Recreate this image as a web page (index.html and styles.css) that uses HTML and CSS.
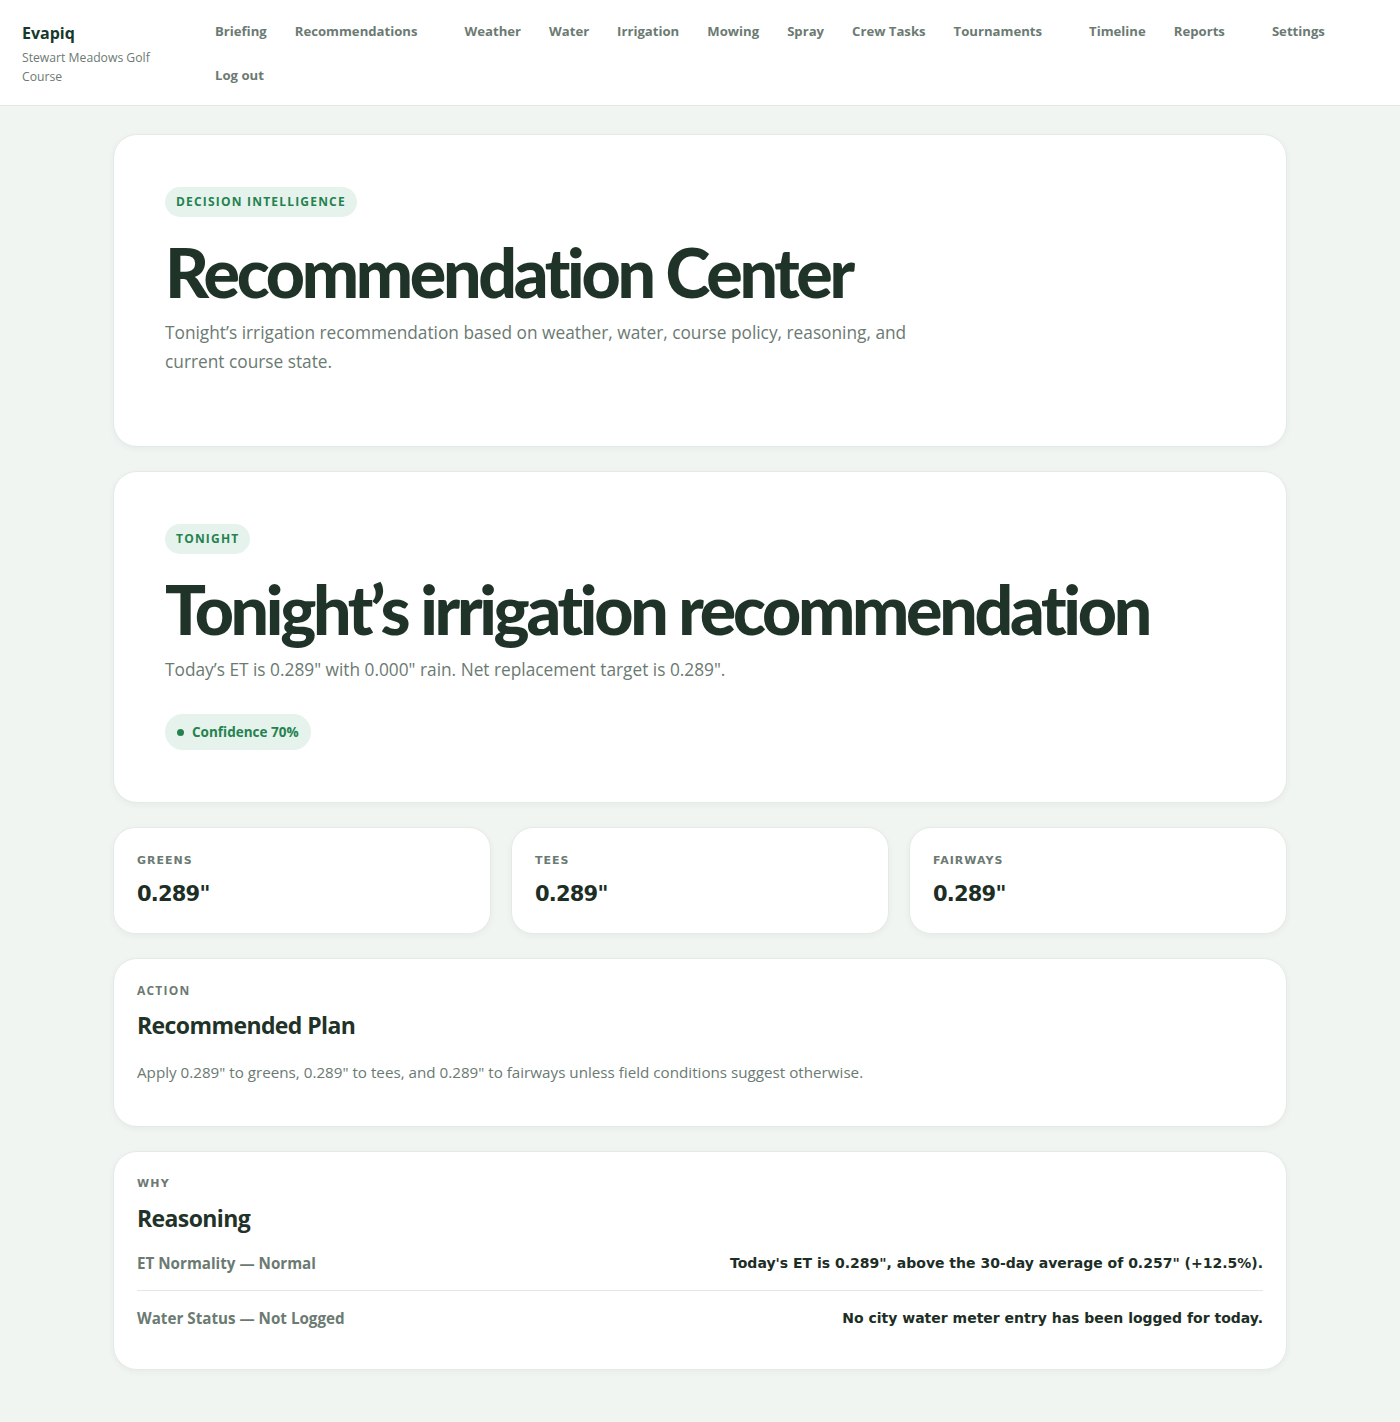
FILE: index.html
```html
<!DOCTYPE html>
<html lang="en">

<head>
    <meta charset="UTF-8">
    <meta name="viewport" content="width=device-width, initial-scale=1.0">
    <title>Recommendations - Evapiq</title>
    <link rel="stylesheet" href="styles.css">
</head>

<body>
    <header class="topbar">
        <div class="brand">
            <div class="brand-name">Evapiq</div>
            <div class="brand-course">Stewart Meadows Golf Course</div>
        </div>
        <nav class="nav">
            <a href="#">Briefing</a>
            <a href="#" class="wide">Recommendations</a>
            <a href="#">Weather</a>
            <a href="#">Water</a>
            <a href="#">Irrigation</a>
            <a href="#">Mowing</a>
            <a href="#">Spray</a>
            <a href="#">Crew Tasks</a>
            <a href="#" class="wide">Tournaments</a>
            <a href="#">Timeline</a>
            <a href="#" class="wide">Reports</a>
            <a href="#">Settings</a>
            <a href="#">Log out</a>
        </nav>
    </header>

    <main class="page">
        <section class="card hero">
            <span class="pill">Decision Intelligence</span>
            <h1>Recommendation Center</h1>
            <p class="lead">Tonight’s irrigation recommendation based on weather, water, course policy, reasoning, and current course state.</p>
        </section>

        <section class="card hero tonight">
            <span class="pill">Tonight</span>
            <h1>Tonight’s irrigation recommendation</h1>
            <p class="lead">Today’s ET is 0.289" with 0.000" rain. Net replacement target is 0.289".</p>
            <span class="confidence"><span class="dot"></span>Confidence 70%</span>
        </section>

        <div class="stats">
            <div class="card stat">
                <div class="stat-label">Greens</div>
                <div class="stat-value">0.289"</div>
            </div>
            <div class="card stat">
                <div class="stat-label">Tees</div>
                <div class="stat-value">0.289"</div>
            </div>
            <div class="card stat">
                <div class="stat-label">Fairways</div>
                <div class="stat-value">0.289"</div>
            </div>
        </div>

        <section class="card panel">
            <div class="eyebrow">Action</div>
            <h2>Recommended Plan</h2>
            <p class="plan">Apply 0.289" to greens, 0.289" to tees, and 0.289" to fairways unless field conditions suggest otherwise.</p>
        </section>

        <section class="card panel">
            <div class="eyebrow why">Why</div>
            <h2>Reasoning</h2>
            <div class="reasons">
                <div class="reason">
                    <div class="reason-title">ET Normality — Normal</div>
                    <div class="reason-text">Today's ET is 0.289", above the 30-day average of 0.257" (+12.5%).</div>
                </div>
                <div class="reason">
                    <div class="reason-title">Water Status — Not Logged</div>
                    <div class="reason-text">No city water meter entry has been logged for today.</div>
                </div>
            </div>
        </section>
    </main>
</body>

</html>
```

FILE: styles.css
```css
body {
    margin: 0;
    background: #f1f5f2;
    font-family: "Open Sans", "Noto Sans", sans-serif;
    color: #1f3329;
}

/* header */
.topbar {
    display: flex;
    align-items: flex-start;
    background: #fff;
    border-bottom: 1px solid #e2e8e4;
    padding: 20px 22px;
    height: 65px;
}

.brand {
    width: 150px;
    margin-right: 43px;
}

.brand-name {
    font-size: 16px;
    font-weight: 700;
    color: #17382a;
    line-height: 26px;
}

.brand-course {
    font-size: 12.2px;
    color: #6d7a73;
    line-height: 19px;
    margin-top: 2px;
    width: 135px;
}

.nav {
    display: flex;
    flex-wrap: wrap;
    column-gap: 28px;
    row-gap: 22px;
    flex: 1;
}

.nav a {
    font-size: 13.15px;
    font-weight: 700;
    color: #6b7a72;
    text-decoration: none;
    line-height: 22px;
}

.nav a.wide {
    margin-right: 19px;
}

/* content */
.page {
    max-width: 1174px;
    margin: 28px auto 0;
    padding-bottom: 56px;
}

.card {
    background: #fff;
    border: 1px solid #e4ebe7;
    border-radius: 24px;
    box-shadow: 0 2px 6px rgba(30, 60, 45, .05);
    box-sizing: border-box;
}

.hero {
    padding: 52px 51px;
    margin-bottom: 24px;
    min-height: 313px;
}

.pill {
    display: inline-block;
    background: #e6f3ec;
    color: #24824f;
    font-size: 12px;
    font-weight: 700;
    letter-spacing: 1.2px;
    text-transform: uppercase;
    padding: 0 11px;
    line-height: 30px;
    border-radius: 15px;
    vertical-align: top;
}

.hero h1 {
    font-family: Lato, "Open Sans", sans-serif;
    font-size: 68px;
    font-weight: 900;
    letter-spacing: -3.3px;
    line-height: 76px;
    margin: 17px 0 8px;
    color: #1f3329;
}

.lead {
    font-size: 17.3px;
    line-height: 29px;
    color: #6b7a72;
    max-width: 760px;
    margin: 0;
}

.confidence {
    display: inline-flex;
    align-items: center;
    gap: 8px;
    margin-top: 30px;
    background: #e6f3ec;
    color: #24824f;
    font-size: 13.5px;
    font-weight: 700;
    padding: 0 12px 0 12px;
    line-height: 36px;
    border-radius: 18px;
    vertical-align: top;
}

.dot {
    width: 7px;
    height: 7px;
    border-radius: 50%;
    background: #24824f;
}

.stats {
    display: grid;
    grid-template-columns: repeat(3, 1fr);
    gap: 20px;
    margin-bottom: 24px;
}

.stat {
    padding: 25px 23px 0;
    height: 107px;
    border-radius: 22px;
}

.stat-label {
    font-family: "DejaVu Sans", sans-serif;
    font-size: 11px;
    font-weight: 700;
    letter-spacing: 1px;
    text-transform: uppercase;
    color: #6b7a72;
    line-height: 16px;
}

.stat-value {
    font-family: "DejaVu Sans", sans-serif;
    font-size: 21px;
    font-weight: 700;
    color: #1c2e25;
    margin-top: 12px;
    letter-spacing: -0.8px;
    line-height: 26px;
}

.panel {
    padding: 24px 23px;
    margin-bottom: 24px;
}

.eyebrow {
    font-size: 12px;
    font-weight: 700;
    letter-spacing: 1.2px;
    text-transform: uppercase;
    color: #6b7a72;
    line-height: 16px;
}

.eyebrow.why {
    font-family: "DejaVu Sans", sans-serif;
    font-size: 11px;
}

.panel h2 {
    font-size: 23px;
    font-weight: 700;
    letter-spacing: -0.6px;
    margin: 10px 0 0;
    line-height: 32px;
}

.plan {
    font-size: 15.2px;
    color: #6b7a72;
    margin: 20px 0 0;
    line-height: 22px;
    padding-bottom: 19px;
}

.reasons {
    margin-top: 2px;
}

.reason {
    display: flex;
    justify-content: space-between;
    align-items: center;
    padding: 16px 0;
    line-height: 22px;
    border-bottom: 1px solid #e2e8e4;
}

.reason:last-child {
    border-bottom: none;
}

.reason-title {
    font-size: 15.2px;
    font-weight: 700;
    color: #6b7a72;
}

.reason-text {
    font-family: "DejaVu Sans", sans-serif;
    font-size: 14px;
    font-weight: 700;
    color: #1c2e25;
    text-align: right;
}
```
